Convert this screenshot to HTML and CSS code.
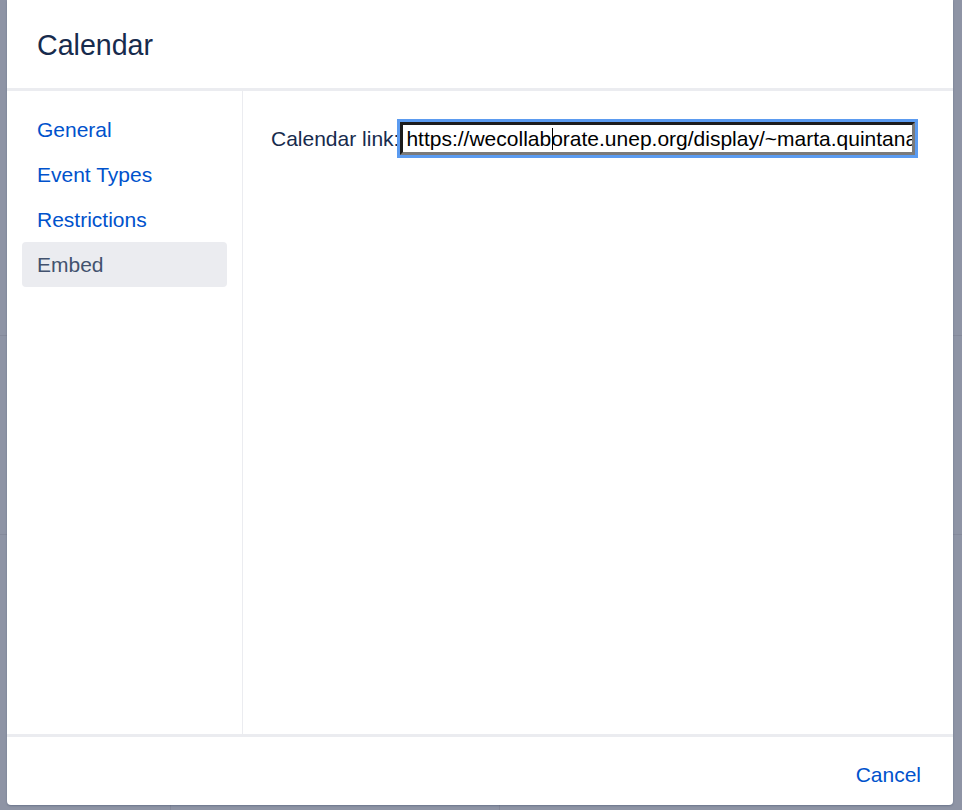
FILE: index.html
```html
<!DOCTYPE html>
<html>
<head>
<meta charset="utf-8">
<link rel="stylesheet" href="styles.css">
</head>
<body>
<div class="backdrop">
  <div class="dialog">
    <header class="dialog-header">
      <h1 class="dialog-title">Calendar</h1>
    </header>
    <div class="dialog-body">
      <nav class="sidebar">
        <a class="nav-item">General</a>
        <a class="nav-item">Event Types</a>
        <a class="nav-item">Restrictions</a>
        <a class="nav-item active">Embed</a>
      </nav>
      <main class="content">
        <div class="field">
          <label class="field-label">Calendar link:</label>
          <div class="field-input"><div class="field-text">https://wecollab<span class="caret"></span>orate.unep.org/display/~marta.quintana</div></div>
        </div>
      </main>
    </div>
    <footer class="dialog-footer">
      <a class="cancel">Cancel</a>
    </footer>
  </div>
</div>
</body>
</html>
```
FILE: styles.css
```css
html, body {
  margin: 0;
  padding: 0;
}
body {
  width: 962px;
  height: 810px;
  overflow: hidden;
  background-color: #8e94a5;
  background-image:
    linear-gradient(to bottom, transparent 335px, #858a9b 335px, #858a9b 336px, transparent 336px),
    linear-gradient(to bottom, transparent 534px, #858a9b 534px, #858a9b 535px, transparent 535px),
    linear-gradient(to right, transparent 170px, #858a9b 170px, #858a9b 171px, transparent 171px),
    linear-gradient(to right, transparent 499px, #858a9b 499px, #858a9b 500px, transparent 500px);
  font-family: "Liberation Sans", Arial, sans-serif;
}
.backdrop {
  padding-left: 7px;
}
.dialog {
  width: 946px;
  height: 805px;
  background: #ffffff;
  border-radius: 0 0 4px 4px;
  box-shadow: 0 1px 2px rgba(9, 30, 66, 0.25);
  display: flex;
  flex-direction: column;
}
.dialog-header {
  height: 88px;
  border-bottom: 3px solid #ebecf0;
  display: flex;
  align-items: center;
  padding-left: 30px;
  box-sizing: content-box;
}
.dialog-title {
  margin: 0;
  font-size: 28.6px;
  font-weight: 400;
  color: #172b4d;
  position: relative;
  top: 1px;
}
.dialog-body {
  flex: 1;
  display: flex;
  min-height: 0;
}
.sidebar {
  width: 205px;
  padding: 16px 15px;
  border-right: 1px solid #ebecf0;
  display: flex;
  flex-direction: column;
}
.nav-item {
  display: block;
  height: 45px;
  line-height: 45px;
  padding-left: 15px;
  font-size: 21px;
  color: #0052cc;
  border-radius: 4px;
}
.nav-item.active {
  background: #ebecf0;
  color: #42526e;
}
.content {
  flex: 1;
  padding: 28px 34px 0 28px;
}
.field {
  display: flex;
  align-items: center;
}
.field-label {
  font-size: 21px;
  color: #172b4d;
  margin-right: -2px;
}
.field-input {
  width: 515px;
  height: 33px;
  border: 3px solid #5b9bf0;
  background: #ffffff;
  flex: none;
}
.field-text {
  height: 27px;
  border-style: solid;
  border-width: 3px;
  border-color: #1c1c1c #7a7a7a #7a7a7a #1c1c1c;
  padding: 0 3px;
  font-size: 21px;
  line-height: 27px;
  color: #000000;
  white-space: nowrap;
  overflow: hidden;
}
.caret {
  display: inline-block;
  width: 1px;
  height: 22px;
  background: #000000;
  vertical-align: -4px;
  margin-right: -2px;
  margin-left: 1px;
}
.dialog-footer {
  height: 68px;
  border-top: 3px solid #ebecf0;
  display: flex;
  align-items: center;
  justify-content: flex-end;
  padding-right: 32px;
}
.cancel {
  font-size: 21px;
  color: #0052cc;
  position: relative;
  top: 4px;
}
```
